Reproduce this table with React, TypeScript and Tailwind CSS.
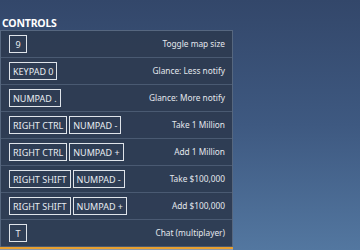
const BINDINGS: { keys: string[]; action: string }[] = [
	{ keys: ["9"], action: "Toggle map size" },
	{ keys: ["KEYPAD 0"], action: "Glance: Less notify" },
	{ keys: ["NUMPAD ."], action: "Glance: More notify" },
	{ keys: ["RIGHT CTRL", "NUMPAD -"], action: "Take 1 Million" },
	{ keys: ["RIGHT CTRL", "NUMPAD +"], action: "Add 1 Million" },
	{ keys: ["RIGHT SHIFT", "NUMPAD -"], action: "Take $100,000" },
	{ keys: ["RIGHT SHIFT", "NUMPAD +"], action: "Add $100,000" },
	{ keys: ["T"], action: "Chat (multiplayer)" },
];

function Key({ label }: { label: string }) {
	return (
		<span className="flex h-[18px] min-w-[18px] items-center justify-center border border-[#dfe4ea] px-[3px] text-[9px] leading-none text-[#e8ecf1]">
			{label}
		</span>
	);
}

export default function App() {
	return (
		<div className="h-[250px] w-[360px] overflow-hidden bg-gradient-to-b from-[#33476a] via-[#3e5981] to-[#5377a0] font-['Noto_Sans',sans-serif]">
			<div className="w-[233px] pt-[17px]">
				<h2 className="pl-[2px] text-[10.5px] font-bold leading-[13px] tracking-[-0.2px] text-white">CONTROLS</h2>
				<div className="border border-b-0 border-[#56677f] bg-[#2d3b51]/95">
					{BINDINGS.map((row) => (
						<div
							key={row.action}
							className="flex h-[27px] items-center justify-between border-b border-[#4a5a72] pl-[8px] pr-[7px]"
						>
							<div className="flex gap-[2px]">
								{row.keys.map((k) => (
									<Key key={k} label={k} />
								))}
							</div>
							<span className="text-[8.3px] text-[#e3e7ed]">{row.action}</span>
						</div>
					))}
				</div>
				<div className="h-[2px] bg-[#e8a030]" />
				<div className="h-[1px] bg-[#8a97a8]" />
			</div>
		</div>
	);
}
